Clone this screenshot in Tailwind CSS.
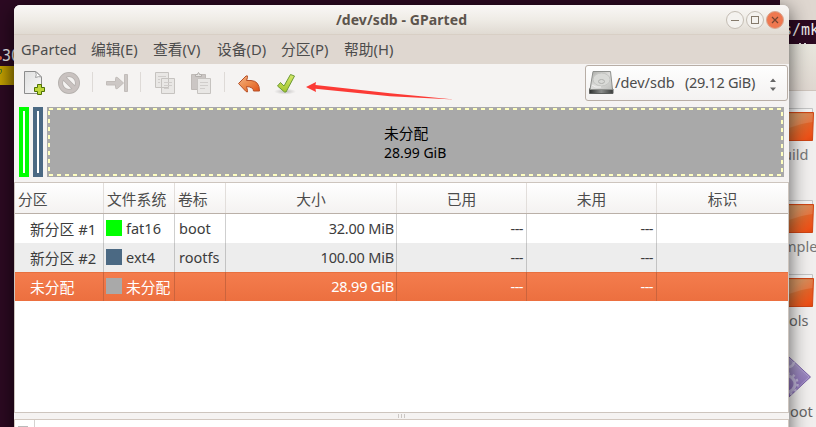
<!DOCTYPE html>
<html lang="zh">
<head>
<meta charset="utf-8">
<title>/dev/sdb - GParted</title>
<script src="https://cdn.jsdelivr.net/npm/@tailwindcss/browser@4"></script>
</head>
<body class="relative w-[816px] h-[427px] overflow-hidden bg-[#2c0a22] font-['Noto_Sans','Noto_Sans_CJK_SC',sans-serif] text-[14.5px] leading-[20px] text-[#4c4c4c] whitespace-nowrap">

<svg width="0" height="0" class="absolute">
  <defs>
    <linearGradient id="fold" x1="0" y1="0" x2="1" y2="1"><stop offset="0" stop-color="#d08a50"/><stop offset=".35" stop-color="#cf8148"/><stop offset=".6" stop-color="#e0652a"/><stop offset=".85" stop-color="#ee5218"/><stop offset="1" stop-color="#dd4611"/></linearGradient>
    <linearGradient id="page" x1="0" y1="0" x2="1" y2="1"><stop offset="0" stop-color="#dedede"/><stop offset="1" stop-color="#fafafa"/></linearGradient>
    <linearGradient id="undo" x1="0" y1="0" x2="1" y2="1"><stop offset="0" stop-color="#f3b487"/><stop offset=".5" stop-color="#ec8848"/><stop offset="1" stop-color="#e04f16"/></linearGradient>
    <linearGradient id="tick" x1="0" y1="0" x2="0" y2="1"><stop offset="0" stop-color="#d5e86a"/><stop offset="1" stop-color="#a3c52c"/></linearGradient>
    <linearGradient id="disk" x1="0" y1="0" x2="1" y2="1"><stop offset="0" stop-color="#a9aaa6"/><stop offset=".5" stop-color="#dededc"/><stop offset="1" stop-color="#bcbdba"/></linearGradient>
    <linearGradient id="dark" x1="0" y1="0" x2="1" y2="0"><stop offset="0" stop-color="#2d302f"/><stop offset=".5" stop-color="#8a8c8a"/><stop offset="1" stop-color="#3a3c3b"/></linearGradient>
    <linearGradient id="gem" x1="0" y1="0" x2="0" y2="1"><stop offset="0" stop-color="#aaa0c6"/><stop offset="1" stop-color="#8463b4"/></linearGradient>
    <radialGradient id="shade"><stop offset="0" stop-color="#000" stop-opacity=".22"/><stop offset="1" stop-color="#000" stop-opacity="0"/></radialGradient>
    <g id="folder">
      <path d="M-8 1.500H24.500V8H-8z" fill="#f2f2f2" stroke="#c4c4c4"/>
      <path d="M-8 5.500H25.500L24.500 33.500H-8z" fill="url(#fold)" stroke="#cf4515"/>
      <path d="M-7 6.500H25L24.500 15Q10 17 -7 24z" fill="#fff" opacity=".12"/>
    </g>
  </defs>
</svg>

<!-- terminal behind, left edge -->
<div class="absolute left-0 top-[56px] h-[4px] w-[2px] rounded-r-full bg-[#e0603c]"></div>
<div class="absolute left-[2px] top-[46px] h-[20px] w-[30px] font-['DejaVu_Sans_Mono'] text-[15px] text-[#eee]">30</div>
<div class="absolute left-0 top-[66px] h-[19px] w-[14px] bg-linear-to-r from-[#c4a000] to-[#a98a00]">
  <svg width="4" height="14" fill="none"><path d="M0 3.500h1.500v2.500L0 8" stroke="#4e7a1c"/></svg>
</div>

<!-- file manager behind, right edge -->
<div class="absolute left-[780px] top-0 w-[36px] h-[427px] bg-[#f1efee]">
  <div class="h-[20px] bg-[#dfd7d0]"></div>
  <div class="h-[24px] overflow-hidden bg-[#2c0a22] pl-[3px] font-['DejaVu_Sans_Mono'] text-[15px] leading-[21px] text-[#eee]">s/mk</div>
  <div class="h-[47px] border-b border-[#cfc5bd] bg-linear-to-b from-[#e8e6dd] to-[#dfd7d0]"></div>
</div>
<div class="absolute left-[788px] top-[43px] h-px w-[28px] flex justify-center gap-[3px]"><i class="w-[2px] bg-[#ddd]"></i><i class="w-[2px] bg-[#ddd]"></i></div>
<svg class="absolute left-[788px] top-0" width="28" height="427">
  <use href="#folder" x="0" y="107"/>
  <use href="#folder" x="0" y="199"/>
  <use href="#folder" x="0" y="273"/>
  <path d="M-20 377L1 357L22.500 377L1 397z" fill="url(#gem)" stroke="#7b62a6"/>
  <path d="M2 359l19 18l-19 18" fill="none" stroke="#b9addb" opacity=".6"/>
  <g fill="none" stroke="#d0cae4" opacity=".75"><circle cx="-1" cy="384" r="8" stroke-width="3"/><circle cx="-1" cy="384" r="10.500" stroke-width="2.500" stroke-dasharray="2.500 3"/><path d="M0 367q5 0 6-5" stroke-width="2.500"/></g>
</svg>
<div class="absolute left-[783px] top-[144px] text-[#777]">uild</div>
<div class="absolute left-[783px] top-[236px] text-[#777]">mple</div>
<div class="absolute left-[789px] top-[310px] text-[#666]">ols</div>
<div class="absolute left-[790px] top-[401px] text-[#666]">oot</div>

<!-- main window -->
<main class="absolute left-[14px] top-[5px] w-[775px] h-[440px] flex flex-col overflow-hidden rounded-t-[6px] bg-[#f5f3f2] shadow-[0_4px_20px_rgba(0,0,0,.65)]">
  <header class="relative h-[30px] shrink-0 flex items-center justify-center border-b border-[#d8cfc5] bg-linear-to-b from-[#f9f7f6] via-[#efece6] to-[#e0dad2]">
    <h1 class="font-bold text-[14px] tracking-[0.08px] text-[#5c544c]">/dev/sdb - GParted</h1>
    <svg class="absolute right-[4px] top-[5px]" width="60" height="20" fill="none">
      <g stroke="#c3bcb3"><circle cx="10" cy="10" r="8.500" fill="#f4f2ef"/><circle cx="30" cy="10" r="8.500" fill="#f4f2ef"/><circle cx="50" cy="10" r="8.500" fill="#ef7850" stroke="#d8a892"/></g>
      <path d="M6 10.500h8" stroke="#857a6c"/><rect x="26.500" y="6.500" width="7" height="7" stroke="#857a6c"/>
      <path d="M47 7l6 6m0-6l-6 6" stroke="#754431" stroke-width="1.200"/>
    </svg>
  </header>
  <nav class="h-[29px] shrink-0 flex items-center bg-[#dfd7d0] pl-[7px] pb-[2px] text-[14.8px]">
    <span class="w-[70px] text-[14.5px]">GParted</span><span class="w-[62px]">编辑(E)</span><span class="w-[64px]">查看(V)</span><span class="w-[64px]">设备(D)</span><span class="w-[63px]">分区(P)</span><span>帮助(H)</span>
  </nav>
  <section class="h-[43px] shrink-0 flex items-start justify-between">
    <svg width="450" height="40" fill="none">
      <g transform="translate(-14 -64)">
        <path d="M24.500 71.500H36L41.500 77V93.500H24.500z" fill="url(#page)" stroke="#8c8c8c"/>
        <path d="M35.500 71.500Q37 75 35.500 77.500Q39 76 41.500 77z" fill="#fff" stroke="#a0a0a0"/>
        <path d="M37.500 84.500h4v3h3v4h-3v3h-4v-3h-3v-4h3z" fill="#bed63a" stroke="#4f7304"/>
        <g stroke="#b4b0ad" stroke-width="5"><circle cx="69" cy="83" r="8.500"/><path d="M63 77l12 12"/></g>
        <g stroke="#c9c2c0" stroke-width="3.400"><circle cx="69" cy="83" r="8.500"/><path d="M63 77l12 12"/></g>
        <path d="M92.500 72v20M140.500 72v20M224.500 72v20" stroke="#dedad7"/>
        <path d="M106.500 81.500h9v-3q0-2 2-1l6 5.500-6 5.500q-2 1-2-1v-2.500h-9z" fill="#cdc8c6" stroke="#c2bdba"/><path d="M124.500 74.500h3v17h-3z" fill="#cdc8c6" stroke="#c2bdba"/>
        <g stroke="#c6c3c0" fill="#e9e7e5"><path d="M155.500 72.500h13v15h-13zM161.500 78.500h13v15h-13z"/><path d="M158 76.500h8M158 79.500h2M158 82.500h2M164 82.500h8M164 85.500h8M164 88.500h5" stroke="#d0cdcb"/></g>
        <path d="M191.500 74.500h14v15h-14z" fill="#cbc6c4" stroke="#bfbab7"/><path d="M195.500 76.500v-2h2q1-4 2 0h2v2z" fill="#e5e3e1" stroke="#b2aeab"/>
        <path d="M197.500 78.500h13v15h-13z" fill="#e9e7e5" stroke="#c6c3c0"/><path d="M200 82.500h8M200 85.500h8M200 88.500h5" stroke="#d0cdcb"/>
        <path d="M238.500 83.500L246 76Q248 75 247.500 77.500L246.500 80.500H251Q259.500 81 259.500 91H253.500Q253.500 87 246.500 86.500L247.500 90.500Q248 93 246 91.500z" fill="url(#undo)" stroke="#b5512a"/>
        <ellipse cx="285" cy="91.500" rx="11" ry="3" fill="url(#shade)"/>
        <path d="M277.500 86L280.500 82.500L284 86L290.500 74.500L294.500 76L286 92L284.500 92z" fill="url(#tick)" stroke="#6d9a35" stroke-linejoin="round"/>
      </g>
    </svg>
    <div class="mt-[1px] mr-[1px] h-[36px] w-[203px] rounded-[3px] border border-[#b8aea6] bg-linear-to-b from-[#fefefe] to-[#f4f2f1] flex items-center pl-[3px]">
      <svg width="25" height="26" fill="none">
        <path d="M.5 19L1.500 18H23L24 19v4.500H.5z" fill="url(#dark)" stroke="#5b5d5b"/>
        <path d="M4 1.500h17.500L23.500 19.500H1z" fill="url(#disk)" stroke="#8e908d"/>
        <ellipse cx="12.500" cy="9.500" rx="8.500" ry="6.500" stroke="#c3c4c1" fill="#d9dad7"/><ellipse cx="12.500" cy="11.500" rx="3" ry="2" stroke="#b0b1ae"/><path d="M3 15q3 3 9 2" stroke="#f2f2f1"/>
      </svg>
      <span class="w-[71px] pl-px pb-[2px]">/dev/sdb</span><span class="w-[82px] pb-[2px] tracking-[-0.3px]">(29.12 GiB)</span>
      <svg class="mt-[3px] ml-[2px]" width="8" height="14"><path d="M1 4l3-3.500 3 3.500zM1 9.500l3 3.500 3-3.500z" fill="#666"/></svg>
    </div>
  </section>

  <section class="h-[75px] shrink-0 flex items-start pl-[5px] gap-[4px]">
    <div class="w-[10px] h-[70px] border-4 border-[#00ff00] bg-white"></div>
    <div class="w-[10px] h-[70px] border-4 border-[#4b6983] bg-white"></div>
    <div class="relative w-[737px] h-[70px] bg-[#a9a9a9] flex items-center">
      <svg class="absolute inset-0" width="737" height="70" stroke="#ffffc0" stroke-width="2" stroke-dasharray="4 4"><path d="M2 2H736M2 68H736M2 4V68M735 5V68"/></svg>
      <div class="ml-[337px] pt-[2px] text-[14px] leading-[20px] text-black"><div class="text-[14.8px]">未分配</div><div>28.99 GiB</div></div>
    </div>
  </section>

  <section class="h-[231px] shrink-0 border border-[#cdc5be] bg-white">
    <div class="grid grid-cols-[89px_71px_51px_171px_130px_130px_131px] h-[31px] border-b border-[#bab0a8] bg-linear-to-b from-white to-[#f4f2f1] text-[14.8px] leading-[32px] *:not-last:border-r *:border-[#e2dedb] *:h-[30px]">
      <div class="pl-[3px]">分区</div><div class="pl-[3px]">文件系统</div><div class="pl-[3px]">卷标</div><div class="text-center">大小</div><div class="text-center">已用</div><div class="text-center">未用</div><div class="text-center">标识</div>
    </div>
    <div class="grid grid-cols-[89px_71px_51px_171px_130px_130px_131px] h-[29px] leading-[28px] text-[#3c3c3c] *:h-[29px] *:not-last:border-r *:border-[#cfcfcf]">
      <div class="pl-[15px] pt-px text-[14.8px]">新分区 #1</div><div class="flex pl-[2px] gap-[4px]"><i class="mt-[6px] size-[16px] bg-[#00ff00]"></i>fat16</div><div class="pl-[4px]">boot</div><div class="text-right pr-[2px] tracking-[-0.2px]">32.00 MiB</div><div class="text-right pr-[3px] tracking-[-0.5px]">---</div><div class="text-right pr-[3px] tracking-[-0.5px]">---</div><div></div>
    </div>
    <div class="grid grid-cols-[89px_71px_51px_171px_130px_130px_131px] h-[29px] leading-[28px] text-[#3c3c3c] bg-[#ededed] *:h-[29px] *:not-last:border-r *:border-[#c3c3c3]">
      <div class="pl-[15px] pt-px text-[14.8px]">新分区 #2</div><div class="flex pl-[2px] gap-[4px]"><i class="mt-[6px] size-[16px] bg-[#4b6983]"></i>ext4</div><div class="pl-[4px]">rootfs</div><div class="text-right pr-[2px] tracking-[-0.2px]">100.00 MiB</div><div class="text-right pr-[3px] tracking-[-0.5px]">---</div><div class="text-right pr-[3px] tracking-[-0.5px]">---</div><div></div>
    </div>
    <div class="grid grid-cols-[89px_71px_51px_171px_130px_130px_131px] h-[29px] leading-[28px] text-white bg-linear-to-b from-[#f47d4e] to-[#ec6f3f] shadow-[inset_0_1px_0_#e8703f] *:h-[29px] *:not-last:border-r *:border-[#cb643d]">
      <div class="pl-[15px] pt-px text-[14.8px]">未分配</div><div class="flex pl-[2px] gap-[4px] text-[14.8px] leading-[30px]"><i class="mt-[6px] size-[16px] bg-[#a9a9a9]"></i>未分配</div><div></div><div class="text-right pr-[2px] tracking-[-0.2px]">28.99 GiB</div><div class="text-right pr-[3px] tracking-[-0.5px]">---</div><div class="text-right pr-[3px] tracking-[-0.5px]">---</div><div></div>
    </div>
  </section>
  <div class="h-[6px] shrink-0 flex items-center justify-center gap-[2px]"><i class="w-px h-[4px] bg-[#cbc7c4]"></i><i class="w-px h-[4px] bg-[#cbc7c4]"></i><i class="w-px h-[4px] bg-[#cbc7c4]"></i></div>
  <section class="h-[30px] shrink-0 border border-[#d2c8c0] bg-white flex">
    <div class="w-[20px] h-full border-r border-[#d5d2d0] pt-[6px] pl-[3px]"><div class="w-[10px] h-[5px] border border-[#bbb]"></div></div>
  </section>
</main>

<!-- hand-drawn annotation arrow -->
<svg class="absolute left-[300px] top-[78px]" width="160" height="26"><path d="M6 9L16 4L15.500 7L90 15.300L154 21.500L90 18.200L15.500 10.800L16 14z" fill="#fc3a35"/></svg>
</body>
</html>
